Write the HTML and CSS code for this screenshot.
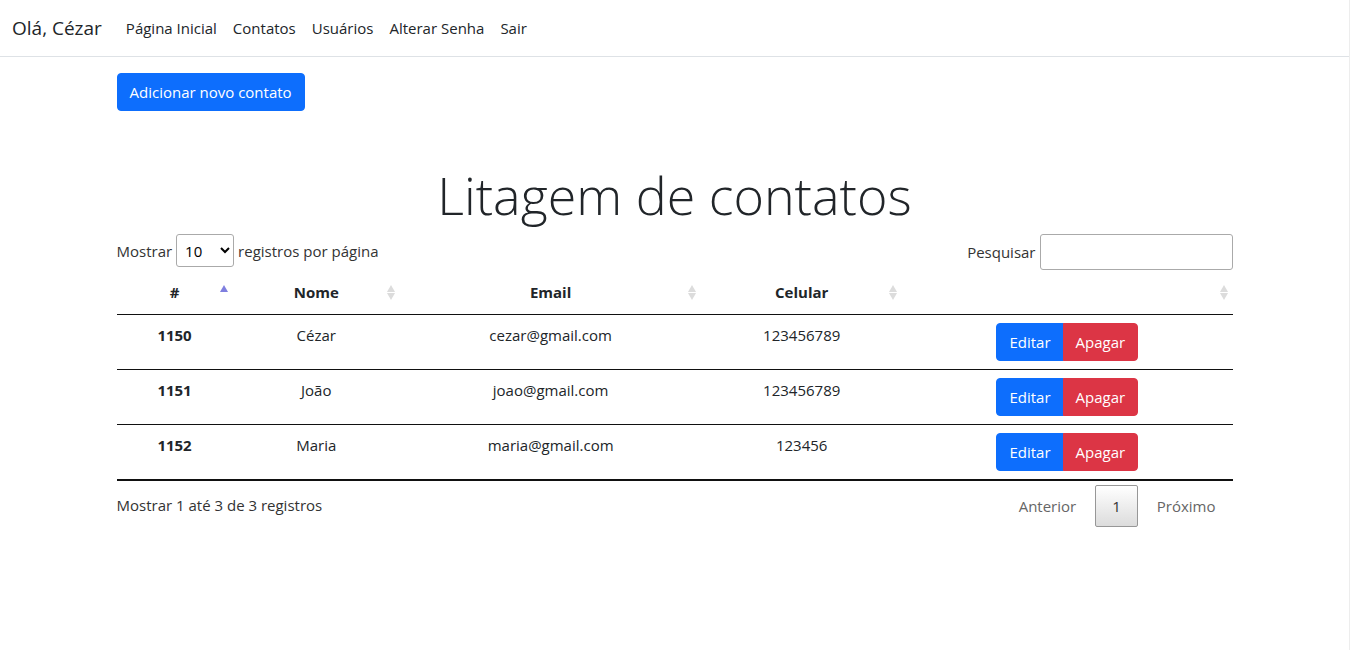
FILE: index.html
```html
<!DOCTYPE html>
<html lang="pt-BR">
<head>
<meta charset="utf-8">
<meta name="viewport" content="width=device-width, initial-scale=1">
<title>Contatos</title>
<link rel="stylesheet" href="styles.css">
</head>
<body>
<header class="navbar">
  <a class="brand" href="#">Olá, Cézar</a>
  <nav class="nav">
    <a href="#">Página Inicial</a>
    <a href="#">Contatos</a>
    <a href="#">Usuários</a>
    <a href="#">Alterar Senha</a>
    <a href="#">Sair</a>
  </nav>
</header>
<main class="container">
  <a class="btn btn-primary" href="#">Adicionar novo contato</a>
  <h1 class="title">Litagem de contatos</h1>
  <div class="toolbar">
    <label class="length">Mostrar
      <select class="field">
        <option>10</option><option>25</option><option>50</option><option>100</option>
      </select>
      registros por página</label>
    <label class="search">Pesquisar <input class="field" type="search"></label>
  </div>
  <table class="table">
    <colgroup><col class="c-id"><col class="c-name"><col class="c-mail"><col class="c-phone"><col class="c-actions"></colgroup>
    <thead>
      <tr>
        <th class="sort asc" scope="col">#</th>
        <th class="sort" scope="col">Nome</th>
        <th class="sort" scope="col">Email</th>
        <th class="sort" scope="col">Celular</th>
        <th class="sort" scope="col"></th>
      </tr>
    </thead>
    <tbody>
      <tr>
        <th scope="row">1150</th><td>Cézar</td><td>cezar@gmail.com</td><td>123456789</td>
        <td><div class="group"><a class="btn btn-primary" href="#">Editar</a><a class="btn btn-danger" href="#">Apagar</a></div></td>
      </tr>
      <tr>
        <th scope="row">1151</th><td>João</td><td>joao@gmail.com</td><td>123456789</td>
        <td><div class="group"><a class="btn btn-primary" href="#">Editar</a><a class="btn btn-danger" href="#">Apagar</a></div></td>
      </tr>
      <tr>
        <th scope="row">1152</th><td>Maria</td><td>maria@gmail.com</td><td>123456</td>
        <td><div class="group"><a class="btn btn-primary" href="#">Editar</a><a class="btn btn-danger" href="#">Apagar</a></div></td>
      </tr>
    </tbody>
  </table>
  <div class="footer">
    <p class="info">Mostrar 1 até 3 de 3 registros</p>
    <div class="pages">
      <a class="page" href="#">Anterior</a>
      <a class="page current" href="#">1</a>
      <a class="page" href="#">Próximo</a>
    </div>
  </div>
</main>
</body>
</html>
```
FILE: styles.css
```css
* { box-sizing: border-box; }
body {
  margin: 0;
  min-height: 100vh;
  border-right: 1px solid #ededed;
  background: #fff;
  color: #212529;
  font-family: "Open Sans", "Noto Sans", sans-serif;
  font-size: 15px;
  line-height: 24px;
}
a { text-decoration: none; color: inherit; }
.navbar {
  display: flex;
  align-items: center;
  gap: 24px;
  height: 57px;
  padding: 0 12px;
  border-bottom: 1px solid #dee2e6;
}
.brand { font-size: 19px; }
.nav { display: flex; gap: 16px; }
.container {
  max-width: 1140px;
  margin: 0 auto;
  padding: 16px 12px;
}
.btn {
  display: inline-block;
  padding: 6px 12px;
  border: 1px solid transparent;
  border-radius: 4px;
  color: #fff;
}
.btn-primary { background: #0d6efd; border-color: #0d6efd; }
.btn-danger { background: #dc3545; border-color: #dc3545; }
.title {
  margin: 50px 0 6px;
  font-size: 52px;
  line-height: 67px;
  font-weight: 300;
  text-align: center;
}
.toolbar {
  display: flex;
  justify-content: space-between;
  align-items: flex-start;
  color: #333;
}
.length, .search { display: flex; align-items: center; gap: 4px; }
.field {
  padding: 4px;
  border: 1px solid #aaa;
  border-radius: 3px;
  font: inherit;
  color: #000;
}
select.field { width: 58px; height: 33px; background: #fff; }
input.field { width: 193px; height: 36px; background: #fff; }
.table {
  width: 100%;
  table-layout: fixed;
  border-collapse: separate;
  border-spacing: 0;
  border-bottom: 1px solid #111;
  text-align: center;
}
.c-id { width: 10.4%; }
.c-name { width: 15%; }
.c-mail { width: 27%; }
.c-phone { width: 18%; }
.c-actions { width: 29.6%; }
.table th, .table td {
  padding: 8px;
  border-bottom: 1px solid #111;
  vertical-align: top;
}
.table thead th { height: 45px; padding: 10px 18px; }
.sort { position: relative; }
.sort::before, .sort::after {
  content: "";
  position: absolute;
  right: 5px;
  border: solid transparent;
  border-width: 0 4px;
}
.sort::before { top: 15px; border-bottom: 7px solid #dcdcdc; }
.sort::after { top: 23px; border-top: 7px solid #dcdcdc; }
.asc::before { border-bottom-color: #7f7fdf; }
.asc::after { display: none; }
.group { display: inline-flex; vertical-align: top; }
.group .btn:first-child { border-radius: 4px 0 0 4px; }
.group .btn:last-child { margin-left: -1px; border-radius: 0 4px 4px 0; }
.footer {
  display: flex;
  justify-content: space-between;
  align-items: flex-start;
  padding-top: 4px;
  color: #333;
}
.info { margin: 8px 0; }
.pages { display: flex; gap: 2px; }
.page {
  padding: 8px 16px;
  border: 1px solid transparent;
  border-radius: 2px;
  color: #666;
}
.current {
  border-color: #979797;
  background: linear-gradient(#fff, #dcdcdc);
  color: #333;
}
```
